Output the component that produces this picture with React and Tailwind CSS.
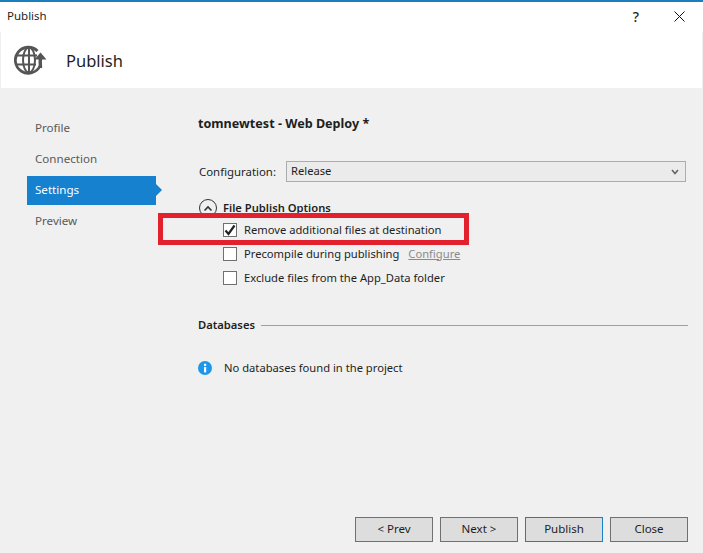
import React from "react";

const font = { fontFamily: '"Noto Sans", "Open Sans", sans-serif' };

function GlobeIcon() {
  return (
    <svg width="34" height="30" viewBox="0 0 34 30" fill="none" stroke="#555555">
      <path d="M23.5 6 A13 13 0 1 0 26 21" strokeWidth="2.8" />
      <ellipse cx="15" cy="15" rx="6" ry="12.5" strokeWidth="2" />
      <path d="M15 2v26M3 10.5h20M3 19.5h19" strokeWidth="2" />
      <path d="M26.5 23 Q26 16 26.5 12" strokeWidth="3.4" />
      <path d="M20.5 14.5 L26.5 7.5 L32.5 14.5 Z" fill="#555555" stroke="none" />
    </svg>
  );
}

function Check({ checked, label, extra }) {
  return (
    <div className="flex items-center h-[24px]">
      <div className="w-[14px] h-[14px] border border-[#707070] bg-white flex items-center justify-center shrink-0">
        {checked && (
          <svg width="12" height="12" viewBox="0 0 12 12" fill="none">
            <path d="M1.5 6.5 L4.5 10 L10.5 1.5" stroke="#222222" strokeWidth="2.2" />
          </svg>
        )}
      </div>
      <span className="ml-[7px] text-[#1e1e1e]">{label}</span>
      {extra && <span className="ml-[9px] text-[#8a8a8a] underline">{extra}</span>}
    </div>
  );
}

function NavItem({ label, active }) {
  if (active) {
    return (
      <div className="relative h-[29px] mt-px mb-px w-[129px] bg-[#1581cf] text-white flex items-center pl-[8px] pb-[1px]">
        {label}
        <div className="absolute left-full top-[8px] w-0 h-0 border-y-[6px] border-y-transparent border-l-[6px] border-l-[#1581cf]" />
      </div>
    );
  }
  return <div className="h-[31px] w-[129px] flex items-center pl-[8px] pb-[1px] text-[#5a5a5a]">{label}</div>;
}

function Btn({ children, primary, className }) {
  return (
    <button
      className={
        "w-[78px] h-[25px] bg-[#dddddd] border text-[#1e1e1e] flex items-center justify-center pb-[1px] " +
        (primary ? "border-[#1681c4] " : "border-[#707070] ") +
        (className || "")
      }
    >
      {children}
    </button>
  );
}

export default function App() {
  return (
    <div
      style={font}
      className="relative w-[703px] h-[553px] overflow-hidden bg-[#f0f0f0] text-[11.2px] flex flex-col"
    >
      <div className="h-[32px] shrink-0 bg-white border-t-[2px] border-[#1b7fbd] flex items-center pl-[7px] pr-[18px] text-[#1e1e1e]">
        <span className="-mt-[3px] text-[11.5px]">Publish</span>
        <span className="ml-auto text-[14px] font-medium -mt-[1px]">?</span>
        <svg className="ml-[35px] -mt-[1px]" width="11" height="11" viewBox="0 0 11 11" stroke="#111111" fill="none" strokeWidth="1">
          <path d="M0.5 0.5 L10.5 10.5 M10.5 0.5 L0.5 10.5" />
        </svg>
      </div>

      <div className="h-[56px] shrink-0 bg-white border-l border-r border-[#f0f0f0] flex items-center pl-[13px]">
        <GlobeIcon />
        <span className="ml-[18px] text-[16.5px] text-[#1e1e1e] mt-[2px]">Publish</span>
      </div>

      <div className="flex flex-1 min-h-0">
        <div className="w-[198px] shrink-0 pl-[27px] pt-[25px] text-[11.6px]">
          <NavItem label="Profile" />
          <NavItem label="Connection" />
          <NavItem label="Settings" active />
          <NavItem label="Preview" />
        </div>

        <div className="flex-1 pr-[15px] flex flex-col">
          <div className="mt-[27px] h-[18px] flex items-center font-bold text-[12.6px] text-[#1e1e1e]">tomnewtest - Web Deploy *</div>

          <div className="mt-[28px] ml-px mr-[2px] flex items-center h-[21px]">
            <span className="w-[87px] text-[11.4px] text-[#1e1e1e]">Configuration:</span>
            <div className="flex-1 h-[21px] border border-[#acacac] bg-[#ebebeb] flex items-center pl-[4px] pr-[6px] text-[#1e1e1e]">
              Release
              <svg className="ml-auto" width="8" height="6" viewBox="0 0 8 6" fill="none" stroke="#666666" strokeWidth="1.6">
                <path d="M1 1 L4 4.5 L7 1" />
              </svg>
            </div>
          </div>

          <div className="mt-[17px] flex items-center h-[18px] ml-px">
            <div className="w-[18px] h-[18px] rounded-full border border-[#333333] flex items-center justify-center bg-[#f0f0f0]">
              <svg width="10" height="7" viewBox="0 0 10 7" fill="none" stroke="#333333" strokeWidth="1.6">
                <path d="M1.5 5.5 L5 2 L8.5 5.5" />
              </svg>
            </div>
            <span className="ml-[6px] font-semibold text-[#1e1e1e]">File Publish Options</span>
          </div>

          <div className="ml-[25px] mt-[1px]">
            <Check checked label="Remove additional files at destination" />
            <Check label="Precompile during publishing" extra="Configure" />
            <Check label="Exclude files from the App_Data folder" />
          </div>

          <div className="mt-[26px] flex items-center h-[18px]">
            <span className="font-semibold text-[#1e1e1e]">Databases</span>
            <div className="ml-[6px] flex-1 h-px bg-[#a0a0a0]" />
          </div>

          <div className="mt-[25px] flex items-center h-[18px]">
            <svg width="14" height="14" viewBox="0 0 14 14">
              <circle cx="7" cy="7" r="7" fill="#1c97ea" />
              <rect x="6" y="6" width="2.2" height="5.4" fill="#ffffff" />
              <rect x="6" y="2.8" width="2.2" height="2.1" fill="#ffffff" />
            </svg>
            <span className="ml-[12px] text-[#1e1e1e]">No databases found in the project</span>
          </div>
        </div>
      </div>

      <div className="shrink-0 h-[36px] flex justify-end gap-[7px] pr-[15px] items-start text-[11.5px]">
        <Btn>&lt; Prev</Btn>
        <Btn>Next &gt;</Btn>
        <Btn primary>Publish</Btn>
        <Btn>Close</Btn>
      </div>

      <div className="absolute left-[158px] top-[213px] w-[311px] h-[32px] border-[5px] border-[#e3202d]" />
    </div>
  );
}
